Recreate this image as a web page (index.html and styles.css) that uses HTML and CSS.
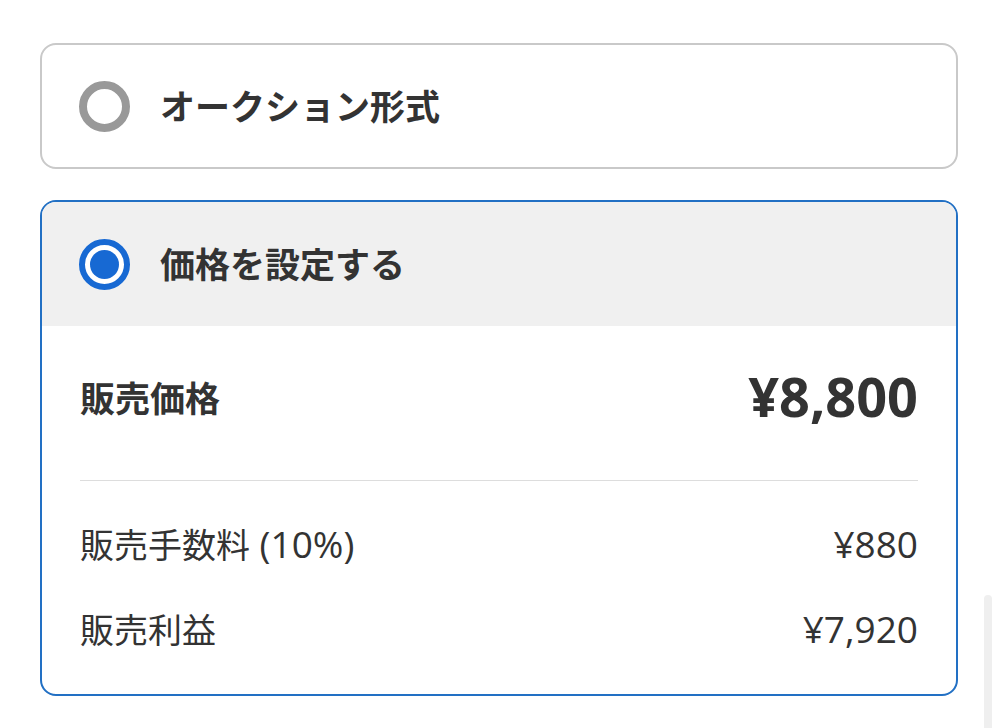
FILE: index.html
```html
<!DOCTYPE html>
<html lang="ja">
<head>
<meta charset="utf-8">
<title>出品形式</title>
<link rel="stylesheet" href="styles.css">
</head>
<body>
<main class="page">
  <section class="option">
    <div class="option-head">
      <span class="radio"></span>
      <span class="option-label">オークション形式</span>
    </div>
  </section>
  <section class="option option-selected">
    <div class="option-head option-head-selected">
      <span class="radio radio-on"><span class="radio-dot"></span></span>
      <span class="option-label">価格を設定する</span>
    </div>
    <div class="option-body">
      <div class="price-row">
        <span class="price-label">販売価格</span>
        <span class="price-value num">¥8,800</span>
      </div>
      <div class="divider"></div>
      <div class="detail-list">
        <div class="detail-row">
          <span class="detail-label">販売手数料<span class="num"> (10%)</span></span>
          <span class="num">¥880</span>
        </div>
        <div class="detail-row">
          <span class="detail-label">販売利益</span>
          <span class="num">¥7,920</span>
        </div>
      </div>
    </div>
  </section>
</main>
<div class="scroll-indicator"></div>
</body>
</html>
```

FILE: styles.css
```css
* { box-sizing: border-box; }
html, body {
  margin: 0;
  padding: 0;
  background: #ffffff;
}
body {
  font-family: "Noto Sans CJK JP", "Noto Sans", sans-serif;
  color: #333333;
  width: 999px;
  height: 728px;
  overflow: hidden;
  position: relative;
}
.page {
  padding: 43px 41px 0 40px;
  display: flex;
  flex-direction: column;
  gap: 31px;
}
.option {
  border: 2px solid #c9c9c9;
  border-radius: 16px;
  overflow: hidden;
  background: #fff;
}
.option-selected {
  border-color: #2270c4;
}
.option-head {
  height: 122px;
  display: flex;
  align-items: center;
  padding-left: 37px;
  gap: 30px;
}
.option-head-selected {
  background: #f0f0f0;
  height: 124px;
}
.radio {
  width: 51px;
  height: 51px;
  border-radius: 50%;
  border: 8px solid #999999;
  flex: none;
  display: flex;
  align-items: center;
  justify-content: center;
}
.radio-on {
  border: 6px solid #1769d3;
  background: #fff;
}
.radio-dot {
  width: 29px;
  height: 29px;
  border-radius: 50%;
  background: #1769d3;
}
.option-label {
  font-size: 35px;
  font-weight: 700;
  line-height: 1;
  color: #333;
  padding-bottom: 4px;
}
.option-body {
  padding: 0 38px;
}
.price-row {
  height: 154px;
  padding-bottom: 14px;
  display: flex;
  justify-content: space-between;
  align-items: center;
}
.price-label {
  font-size: 35px;
  font-weight: 700;
}
.num {
  font-family: "Open Sans", "Noto Sans CJK JP", sans-serif;
}
.price-value {
  font-size: 54px;
  font-weight: 700;
  line-height: 1;
}
.divider {
  height: 1px;
  background: #dddddd;
}
.detail-list {
  padding: 20px 0 23px;
}
.detail-row {
  height: 85px;
  display: flex;
  justify-content: space-between;
  align-items: center;
  font-size: 34px;
  font-weight: 400;
}
.detail-row .num {
  font-size: 37px;
  line-height: 1;
}
.scroll-indicator {
  position: absolute;
  left: 984px;
  top: 595px;
  width: 8px;
  height: 140px;
  border-radius: 4px;
  background: #efefef;
}
```
